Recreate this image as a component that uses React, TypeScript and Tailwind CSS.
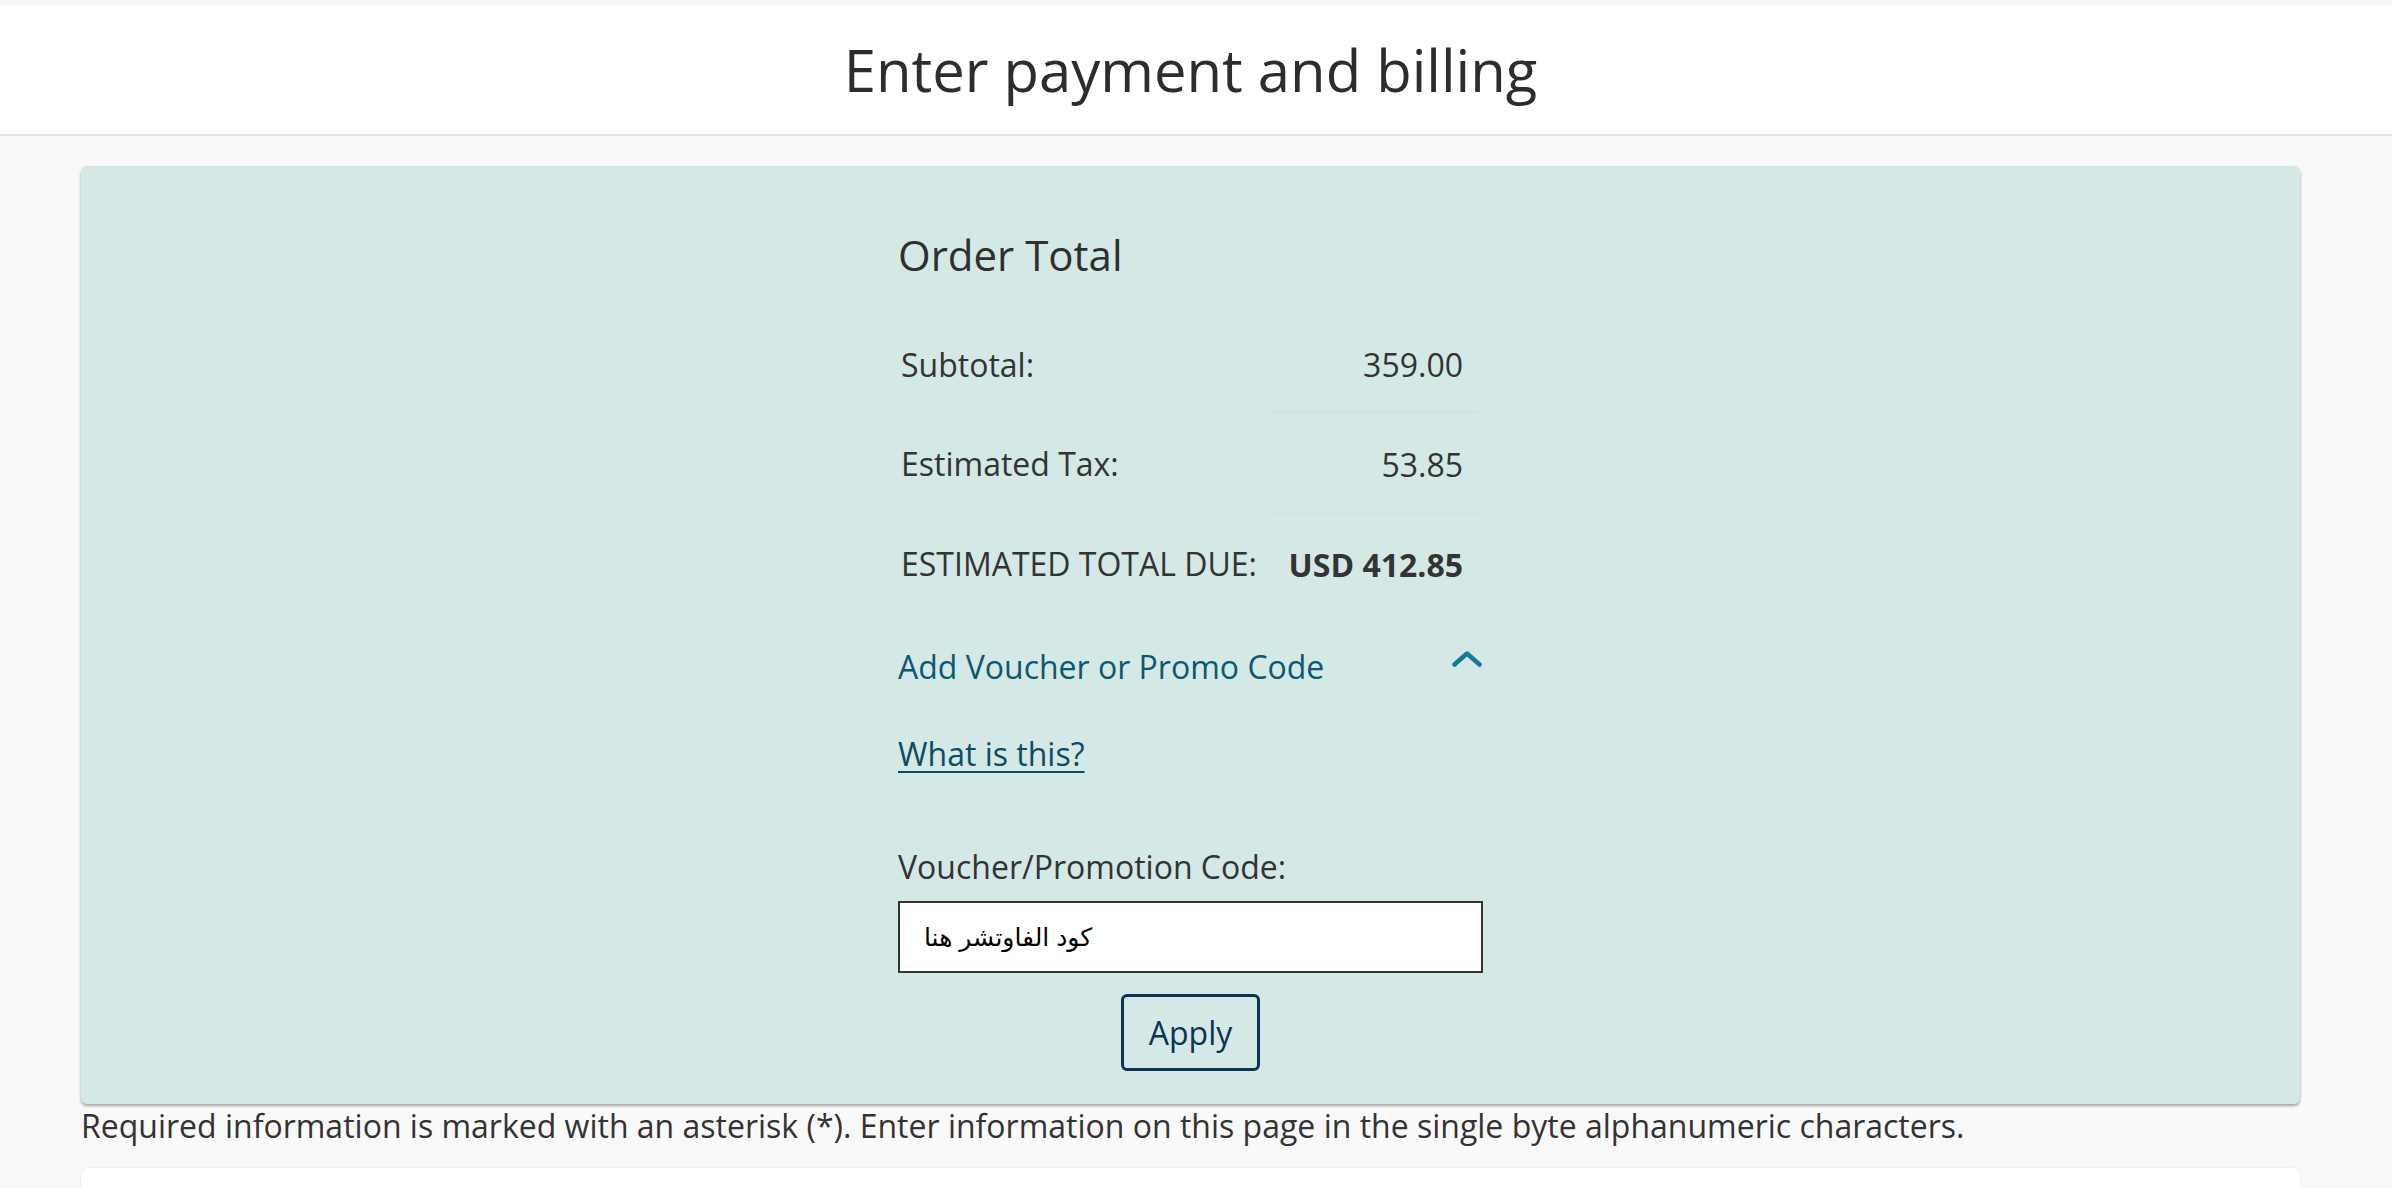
import { useState } from 'react'

// ─────────────────────────────────────────────────
// Data
// ─────────────────────────────────────────────────

interface TotalRow {
  label: string
  value: string
  strong?: boolean
  divider?: boolean
}

const rows: TotalRow[] = [
  { label: 'Subtotal:', value: '359.00', divider: true },
  { label: 'Estimated Tax:', value: '53.85', divider: true },
  { label: 'ESTIMATED TOTAL DUE:', value: 'USD 412.85', strong: true },
]

// ─────────────────────────────────────────────────
// Component
// ─────────────────────────────────────────────────

function ChevronUp() {
  return (
    <svg width="30" height="16" viewBox="0 0 30 16" fill="none" className="shrink-0">
      <path d="M2.5 13.5 L15 2.5 L27.5 13.5" stroke="#17799a" strokeWidth="4.5" strokeLinecap="round" strokeLinejoin="round" />
    </svg>
  )
}

export default function App() {
  const [open, setOpen] = useState(true)
  const [code, setCode] = useState('كود الفاوتشر هنا')

  return (
    <div className="min-h-screen bg-[#f9f9f9] text-[#333333] font-['Open_Sans',sans-serif]">
      {/* Header */}
      <div className="h-[5px] bg-[#f7f7f7]" />
      <header className="h-[131px] bg-white border-b-2 border-[#e3e3e3]">
        <div className="w-[2381px] h-full flex items-center justify-center">
          <h1 className="text-[58px] leading-[60px] text-[#2d2d2d] font-normal">Enter payment and billing</h1>
        </div>
      </header>

      <main className="w-[2381px] pt-[30px] pb-10">
        {/* Order total card */}
        <section className="mx-[81px] h-[938px] rounded-[6px] bg-[#d4e9e6] shadow-[0_2px_3px_rgba(0,0,0,0.35)] pt-[59px]">
          <div className="mx-auto w-[585px]">
            <h2 className="text-[42px] leading-[60px] font-normal text-[#2f2f2f]">Order Total</h2>

            <table className="mt-[29px] w-[581px] border-collapse text-[32px] leading-[48px]">
              <tbody>
                {rows.map((row) => (
                  <tr key={row.label}>
                    <td className="pl-[3px] pt-[27px] pb-[22px] align-top whitespace-nowrap">{row.label}</td>
                    <td
                      className={`w-[208px] pt-[27px] pr-[16px] text-right align-top whitespace-nowrap ${row.strong ? 'font-bold' : ''} ${row.divider ? 'pb-[22px] border-b-[3px] border-[#d8e1e0]' : 'pb-[25px]'}`}
                    >
                      {row.value}
                    </td>
                  </tr>
                ))}
              </tbody>
            </table>

            {/* Voucher toggle */}
            <button
              type="button"
              onClick={() => setOpen(!open)}
              className="mt-[29px] w-full flex items-start justify-between text-left cursor-pointer"
            >
              <span className="text-[32px] leading-[48px] text-[#0c5870]">Add Voucher or Promo Code</span>
              <span className="mt-[8px] mr-[1px]">
                <ChevronUp />
              </span>
            </button>

            {open && (
              <div>
                <a href="#" className="mt-[39px] block w-max text-[32px] leading-[48px] text-[#0b4c66] underline decoration-2 underline-offset-[5px]">
                  What is this?
                </a>

                <label className="mt-[65px] block text-[32px] leading-[48px] text-[#333333]">Voucher/Promotion Code:</label>
                <input
                  value={code}
                  onChange={(e) => setCode(e.target.value)}
                  className="mt-[10px] block w-[585px] h-[72px] bg-white border-2 border-[#333333] pl-[24px] text-[25px] text-black font-['Liberation_Sans','DejaVu_Sans',sans-serif] outline-none"
                />

                <div className="mt-[21px] flex justify-center">
                  <button
                    type="button"
                    className="w-[139px] h-[77px] rounded-[6px] border-[3px] border-[#0c3256] text-[32px] text-[#0c3256]"
                  >
                    Apply
                  </button>
                </div>
              </div>
            )}
          </div>
        </section>

        <p className="mx-[81px] text-[32px] leading-[44px] text-[#333333]">
          Required information is marked with an asterisk (*). Enter information on this page in the single byte alphanumeric characters.
        </p>

        {/* Next card */}
        <section className="mx-[81px] mt-[20px] h-[300px] rounded-[6px] bg-white shadow-[0_0_3px_rgba(0,0,0,0.08)]" />
      </main>
    </div>
  )
}
